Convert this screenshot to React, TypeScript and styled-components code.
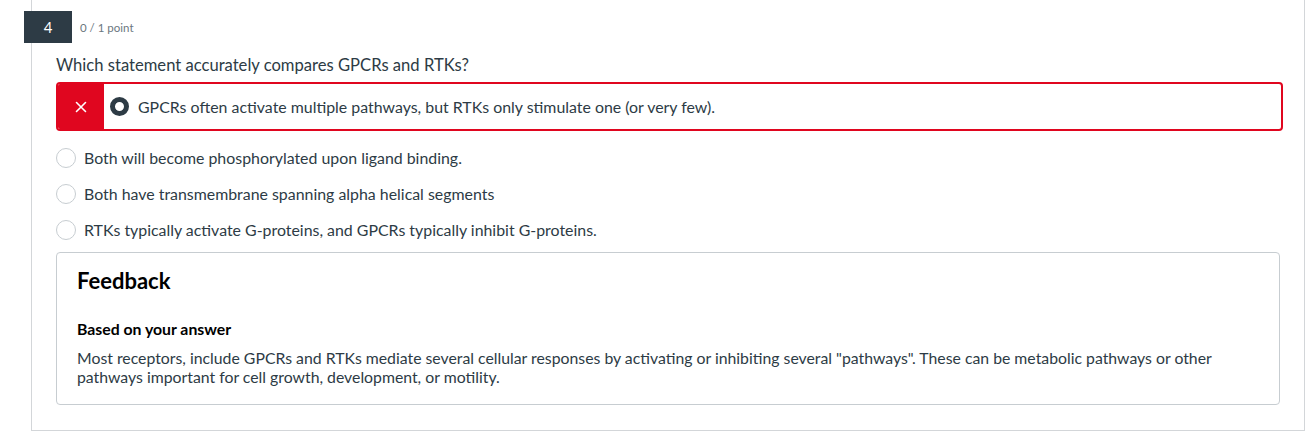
import React from "react";
import styled, { createGlobalStyle } from "styled-components";

const GlobalStyle = createGlobalStyle`
  body {
    margin: 0;
    background: #ffffff;
    font-family: Lato, "Noto Sans", sans-serif;
    color: #2d3b45;
  }
`;

interface Answer {
  id: string;
  text: string;
}

const answers: Answer[] = [
  { id: "a2", text: "Both will become phosphorylated upon ligand binding." },
  { id: "a3", text: "Both have transmembrane spanning alpha helical segments" },
  {
    id: "a4",
    text: "RTKs typically activate G-proteins, and GPCRs typically inhibit G-proteins.",
  },
];

export default function App() {
  return (
    <>
      <GlobalStyle />
      <QuestionCard>
        <Header>
          <Number>4</Number>
          <Points>0 / 1 point</Points>
        </Header>
        <Body>
          <Prompt>Which statement accurately compares GPCRs and RTKs?</Prompt>
          <SelectedAnswer>
            <WrongMark>
              <svg width="12" height="12" viewBox="0 0 12 12">
                <path
                  d="M1.5 1.5 L10.5 10.5 M10.5 1.5 L1.5 10.5"
                  stroke="#fff"
                  strokeWidth="1.6"
                  strokeLinecap="round"
                />
              </svg>
            </WrongMark>
            <SelectedRadio />
            <AnswerText>
              GPCRs often activate multiple pathways, but RTKs only stimulate one (or very few).
            </AnswerText>
          </SelectedAnswer>
          <AnswerList>
            {answers.map((a) => (
              <AnswerRow key={a.id}>
                <Radio />
                <AnswerText>{a.text}</AnswerText>
              </AnswerRow>
            ))}
          </AnswerList>
          <Feedback>
            <FeedbackTitle>Feedback</FeedbackTitle>
            <FeedbackLabel>Based on your answer</FeedbackLabel>
            <FeedbackText>
              Most receptors, include GPCRs and RTKs mediate several cellular responses by
              activating or inhibiting several "pathways". These can be metabolic pathways or
              other pathways important for cell growth, development, or motility.
            </FeedbackText>
          </Feedback>
        </Body>
      </QuestionCard>
    </>
  );
}

const QuestionCard = styled.div`
  margin-left: 31px;
  width: 1272px;
  height: 430px;
  border-left: 1px solid #d3d6d9;
  border-right: 1px solid #d3d6d9;
  border-bottom: 1px solid #d3d6d9;
`;

const Header = styled.div`
  display: flex;
  align-items: center;
  padding-top: 11px;
  margin-left: -8px;
`;

const Number = styled.div`
  width: 48px;
  height: 32px;
  background: #2d3b45;
  color: #ffffff;
  font-size: 15px;
  display: flex;
  align-items: center;
  justify-content: center;
`;

const Points = styled.span`
  margin-left: 8px;
  font-size: 11.5px;
  color: #6b7780;
`;

const Body = styled.div`
  padding: 0 24px;
`;

const Prompt = styled.div`
  margin-top: 12px;
  font-size: 16.6px;
  line-height: 20px;
`;

const SelectedAnswer = styled.div`
  margin-top: 7px;
  margin-right: -3px;
  height: 45px;
  display: flex;
  align-items: center;
  border: 2px solid #e0061f;
  border-radius: 4px;
  overflow: hidden;
`;

const WrongMark = styled.div`
  width: 46px;
  align-self: stretch;
  background: #e0061f;
  display: flex;
  align-items: center;
  justify-content: center;
`;

const SelectedRadio = styled.span`
  box-sizing: border-box;
  width: 19px;
  height: 19px;
  margin-left: 6px;
  margin-right: 9px;
  border-radius: 50%;
  border: 5px solid #2d3b45;
  flex-shrink: 0;
`;

const AnswerList = styled.div`
  margin-top: 9px;
  display: flex;
  flex-direction: column;
`;

const AnswerRow = styled.div`
  height: 36px;
  display: flex;
  align-items: center;
`;

const Radio = styled.span`
  box-sizing: border-box;
  width: 20px;
  height: 20px;
  margin-right: 8px;
  border-radius: 50%;
  border: 1px solid #c7cdd1;
  background: #ffffff;
  flex-shrink: 0;
`;

const AnswerText = styled.span`
  font-size: 15.9px;
  line-height: 20px;
`;

const Feedback = styled.div`
  margin-top: 4px;
  height: 151px;
  box-sizing: content-box;
  border: 1px solid #c7cdd1;
  border-radius: 4px;
  padding: 0 20px;
`;

const FeedbackTitle = styled.h2`
  margin: 14px 0 0;
  font-size: 22px;
  line-height: 28px;
  font-weight: 700;
  color: #000000;
`;

const FeedbackLabel = styled.div`
  margin-top: 24px;
  font-size: 15.8px;
  line-height: 20px;
  font-weight: 700;
  color: #000000;
`;

const FeedbackText = styled.p`
  margin: 9px 0 0;
  font-size: 15.8px;
  line-height: 19px;
`;
